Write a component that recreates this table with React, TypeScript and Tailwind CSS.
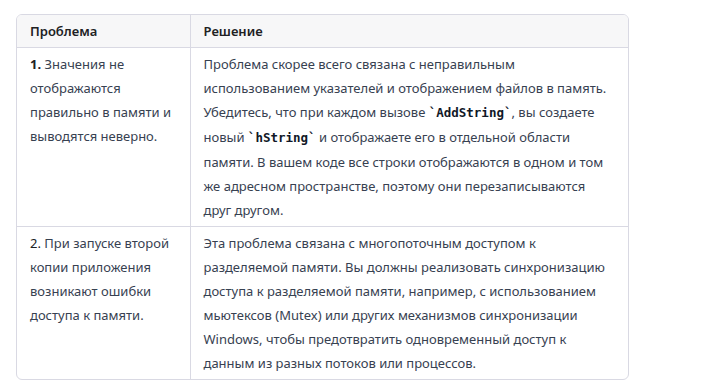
export default function App() {
  const code = "font-bold text-[#111827] text-[12.5px] font-['DejaVu_Sans_Mono',monospace]";
  const rows = [
    {
      n: "1.",
      problem: "Значения не отображаются правильно в памяти и выводятся неверно.",
      bold: true,
      solution: (
        <>
          Проблема скорее всего связана с неправильным использованием указателей и отображением файлов в память.
          Убедитесь, что при каждом вызове <code className={code}>`AddString`</code>, вы создаете
          новый <code className={code}>`hString`</code> и отображаете его в отдельной области
          памяти. В вашем коде все строки отображаются в одном и том же адресном пространстве, поэтому они перезаписываются
          друг другом.
        </>
      ),
    },
    {
      n: "2.",
      problem: "При запуске второй копии приложения возникают ошибки доступа к памяти.",
      bold: false,
      solution: (
        <>
          Эта проблема связана с многопоточным доступом к разделяемой памяти. Вы должны реализовать синхронизацию
          доступа к разделяемой памяти, например, с использованием мьютексов (Mutex) или других механизмов синхронизации
          Windows, чтобы предотвратить одновременный доступ к данным из разных потоков или процессов.
        </>
      ),
    },
  ];

  return (
    <div className="w-[702px] h-[386px] bg-white font-['Noto_Sans',sans-serif] text-[13px] leading-6 text-[#374151]">
      <div className="ml-4 pt-[14px]">
        <div className="w-[613px] border border-[#d9d9e3] rounded-md overflow-hidden">
          <table className="w-full border-collapse">
            <thead>
              <tr className="bg-[#f7f7f8]">
                <th className="w-[173px] text-left font-semibold text-[#202123] px-[13px] py-1 border-r border-b border-[#d9d9e3]">
                  Проблема
                </th>
                <th className="text-left font-semibold text-[#202123] px-[13px] py-1 border-b border-[#d9d9e3]">
                  Решение
                </th>
              </tr>
            </thead>
            <tbody>
              {rows.map((r, i) => (
                <tr key={i}>
                  <td
                    className={`align-top px-[13px] py-1 border-r border-[#d9d9e3] ${
                      i === 0 ? "border-b" : ""
                    }`}
                  >
                    <span className={r.bold ? "font-bold text-[#202123]" : "text-[#202123]"}>{r.n}</span> {r.problem}
                  </td>
                  <td className={`align-top px-[13px] py-1 border-[#d9d9e3] ${i === 0 ? "border-b" : ""}`}>
                    {r.solution}
                  </td>
                </tr>
              ))}
            </tbody>
          </table>
        </div>
      </div>
    </div>
  );
}
